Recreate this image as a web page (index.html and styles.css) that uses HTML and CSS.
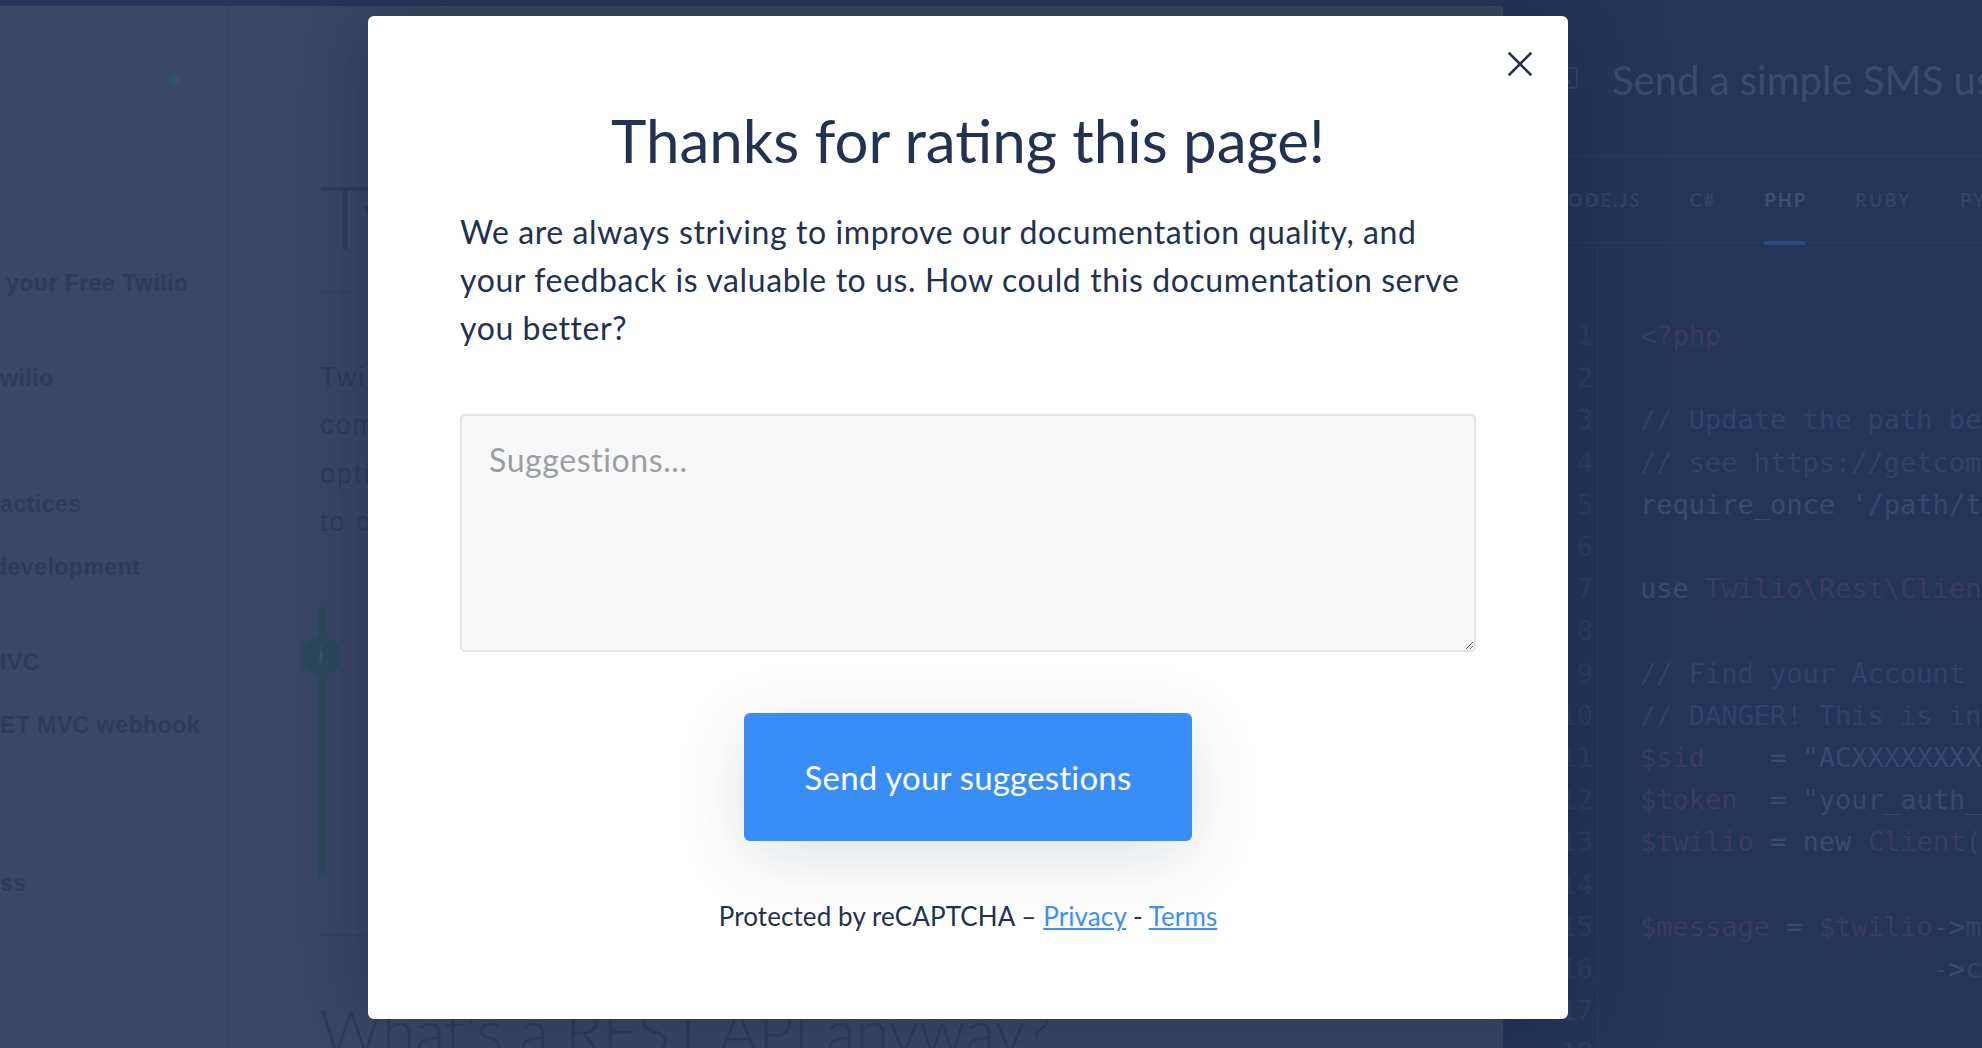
FILE: index.html
```html
<!DOCTYPE html>
<html lang="en">
<head>
<meta charset="utf-8">
<title>Thanks for rating this page</title>
<link rel="stylesheet" href="styles.css">
</head>
<body>
<div class="page">
  <div class="left">
    <div class="leftrow">
      <aside class="sidebar">
        <div class="side-head"><span class="dot"></span></div>
        <nav class="nav">
          <div class="nav-item ind">your Free Twilio</div>
          <div class="nav-item g2">wilio</div>
          <div class="nav-item g3">actices</div>
          <div class="nav-item g1 cut">development</div>
          <div class="nav-item g2">IVC</div>
          <div class="nav-item g1">ET MVC webhook</div>
          <div class="nav-item g4">ss</div>
        </nav>
      </aside>
      <main class="content">
        <h1 class="doc-title">Twilio's REST API</h1>
        <div class="rule"></div>
        <p class="doc-text">Twilio's APIs (Application Programming Interfaces) power its platform<br>communications. Behind these APIs is a software layer connecting and<br>optimizing communications networks around the world to allow your users<br>to call and message anyone, globally.</p>
        <div class="timeline">
          <div class="bar"></div>
          <div class="info">i</div>
        </div>
        <div class="rule rule2"></div>
        <h2 class="doc-sub">What’s a REST API anyway?</h2>
      </main>
    </div>
  </div>
  <section class="codepanel">
    <div class="code-head">
      <svg class="code-icon" viewBox="0 0 28 28" width="28" height="28"><path d="M9 4h10a3 3 0 0 1 3 3v14a3 3 0 0 1-3 3H9a3 3 0 0 1-3-3V7a3 3 0 0 1 3-3z" fill="none" stroke="#34456a" stroke-width="2"/><circle cx="14" cy="18" r="2" fill="#34456a"/></svg>
      <span class="code-title">Send a simple SMS using PHP</span>
    </div>
    <div class="tabs">
      <span class="tab">NODE.JS</span>
      <span class="tab">C#</span>
      <span class="tab active">PHP</span>
      <span class="tab">RUBY</span>
      <span class="tab">PYTHON</span>
    </div>
    <div class="codebody">
      <div class="gutter">1<br>2<br>3<br>4<br>5<br>6<br>7<br>8<br>9<br>10<br>11<br>12<br>13<br>14<br>15<br>16<br>17<br>18</div>
      <pre class="lines"><span class="v">&lt;?php</span>

<span class="c">// Update the path below to your autoload.php,</span>
<span class="c">// see https://getcomposer.org/doc/01-basic-usage.md</span>
<span class="k">require_once</span> <span class="s">'/path/to/vendor/autoload.php'</span>;

<span class="k">use</span> <span class="v">Twilio\Rest\Client</span>;

<span class="c">// Find your Account Sid and Auth Token at twilio.com/console</span>
<span class="c">// DANGER! This is insecure. See http://twil.io/secure</span>
<span class="v">$sid</span>    <span class="k">=</span> <span class="s">"ACXXXXXXXXXXXXXXXXXXXXXXXXXXXXXXXX"</span>;
<span class="v">$token</span>  <span class="k">=</span> <span class="s">"your_auth_token"</span>;
<span class="v">$twilio</span> <span class="k">=</span> <span class="k">new</span> <span class="v">Client</span>(<span class="v">$sid</span>, <span class="v">$token</span>);

<span class="v">$message</span> <span class="k">=</span> <span class="v">$twilio</span><span class="k">-&gt;</span>messages
                  <span class="k">-&gt;</span>create(<span class="s">"+15558675310"</span>, <span class="c">// to</span>
                           array(
                               <span class="s">"body"</span> =&gt; <span class="s">"Hello"</span></pre>
    </div>
  </section>

  <div class="modal">
    <button class="close" aria-label="Close">
      <svg viewBox="0 0 24 24" width="24" height="24"><path d="M1.5 1.5L22.5 22.5M22.5 1.5L1.5 22.5" stroke="#22314f" stroke-width="2.6" stroke-linecap="round"/></svg>
    </button>
    <h2 class="m-title">Thanks for rating this page!</h2>
    <p class="m-text">We are always striving to improve our documentation quality, and your feedback is valuable to us. How could this documentation serve you better?</p>
    <textarea class="m-input" placeholder="Suggestions..."></textarea>
    <button class="m-send">Send your suggestions</button>
    <p class="m-foot">Protected by reCAPTCHA – <a href="#">Privacy</a> - <a href="#">Terms</a></p>
  </div>
</div>
</body>
</html>
```

FILE: styles.css
```css
* { box-sizing: border-box; }
html, body { margin: 0; padding: 0; }
body {
  width: 1982px;
  height: 1048px;
  overflow: hidden;
  background: #263659;
  font-family: "Lato", "Open Sans", sans-serif;
}
.page {
  position: relative;
  display: flex;
  width: 1982px;
  height: 1048px;
  overflow: hidden;
}
.left {
  flex: 1;
  display: flex;
  flex-direction: column;
  padding-top: 6px;
  background: #263659;
}
.leftrow {
  flex: 1;
  display: flex;
  background: #3a4866;
}
.sidebar {
  width: 228px;
  border-right: 1px solid #36435f;
  overflow: hidden;
  font-family: "Liberation Sans", Arial, sans-serif;
  font-weight: 700;
  font-size: 23px;
  letter-spacing: 0.5px;
  color: #2e3c5a;
}
.side-head {
  height: 149px;
  border-bottom: 1px solid #37445f;
  display: flex;
  align-items: center;
  justify-content: flex-end;
  padding-right: 47px;
}
.dot {
  width: 12px;
  height: 12px;
  border-radius: 50%;
  background: #335467;
}
.nav { padding-top: 113px; }
.nav-item { line-height: 31.6px; white-space: nowrap; }
.nav-item.ind { padding-left: 6px; }
.nav-item.cut { text-indent: -7px; }
.g1 { margin-top: 31.6px; }
.g2 { margin-top: 63.2px; }
.g3 { margin-top: 94.8px; }
.g4 { margin-top: 126.4px; }

.content {
  flex: 1;
  padding-left: 92px;
  overflow: hidden;
  color: #2f3d5b;
}
.doc-title {
  margin: 158px 0 0;
  font-family: "Lato", sans-serif;
  font-weight: 300;
  font-size: 86px;
  line-height: 1.2;
  white-space: nowrap;
}
.rule {
  margin-top: 25px;
  height: 1px;
  background: #35435f;
  margin-left: -3px;
}
.doc-text {
  margin: 60px 0 0;
  font-family: "Liberation Sans", Arial, sans-serif;
  font-size: 27px;
  line-height: 48.3px;
  letter-spacing: 2px;
  white-space: nowrap;
}
.timeline {
  position: relative;
  margin-top: 61px;
  margin-left: -2px;
  height: 269px;
  width: 40px;
}
.bar {
  width: 7px;
  height: 100%;
  background: #2f4a5c;
}
.info {
  position: absolute;
  left: -17px;
  top: 29px;
  width: 40px;
  height: 40px;
  border-radius: 50%;
  background: #2e4a5b;
  color: #3a5468;
  font: 700 22px/40px "Liberation Sans", sans-serif;
  text-align: center;
}
.rule2 { margin-top: 59px; }
.doc-sub {
  margin: 58px 0 0;
  font-family: "Lato", sans-serif;
  font-weight: 300;
  font-size: 61px;
  line-height: 1.2;
  white-space: nowrap;
}

.codepanel {
  width: 479px;
  background: #25355a;
  color: #34456a;
  overflow: hidden;
}
.code-head {
  height: 157px;
  border-bottom: 1px solid #2b3b60;
  display: flex;
  align-items: center;
  padding-left: 52px;
  gap: 29px;
}
.code-icon { flex: none; }
.code-title {
  font-family: "Lato", sans-serif;
  font-size: 40px;
  color: #3b4b6f;
  white-space: nowrap;
  margin-top: 3px;
}
.tabs {
  height: 86px;
  border-bottom: 1px solid #2b3b60;
  display: flex;
  align-items: center;
  padding-left: 25px;
  white-space: nowrap;
}
.tab {
  position: relative;
  padding: 0 24px;
  font-family: "Lato", sans-serif;
  font-weight: 700;
  font-size: 18px;
  letter-spacing: 2.2px;
  color: #33446a;
  line-height: 86px;
}
.tab.active { color: #3e4f74; }
.tab.active::after {
  content: "";
  position: absolute;
  left: 24px;
  right: 26px;
  bottom: -2px;
  height: 4px;
  background: #2c4a82;
}
.codebody {
  display: flex;
  padding-top: 72px;
  font-family: "DejaVu Sans Mono", "Liberation Mono", monospace;
  font-size: 27px;
  line-height: 42.2px;
}
.gutter {
  width: 95px;
  flex: none;
  text-align: right;
  padding-right: 4px;
  border-right: 1px solid #2a3a5e;
  color: #2d3d62;
  margin-top: -72px;
  padding-top: 72px;
}
.lines {
  margin: 0;
  padding-left: 42px;
  font: inherit;
  color: #33446a;
  white-space: pre;
}
.lines .c { color: #31436a; }
.lines .k { color: #3a4b71; }
.lines .v { color: #393d5e; }
.lines .s { color: #384870; }

.modal {
  position: absolute;
  left: 368px;
  top: 16px;
  width: 1200px;
  height: 1003px;
  background: #fff;
  border-radius: 6px;
  box-shadow: 0 0 90px rgba(15, 25, 45, 0.35);
  padding: 89px 92px 0;
  display: flex;
  flex-direction: column;
  color: #22314f;
}
.close {
  position: absolute;
  top: 36px;
  right: 36px;
  width: 24px;
  height: 24px;
  padding: 0;
  border: 0;
  background: none;
  display: flex;
}
.m-title {
  margin: 0;
  text-align: center;
  font-size: 60px;
  font-weight: 400;
  line-height: 70px;
  color: #233251;
}
.m-text {
  margin: 33px 0 0;
  font-size: 32px;
  letter-spacing: 0.6px;
  line-height: 48px;
}
.m-input {
  margin-top: 62px;
  height: 238px;
  width: 100%;
  border: 2px solid #e4e4e4;
  border-radius: 5px;
  background: #f8f8f8;
  padding: 20px 27px;
  font-family: "Lato", sans-serif;
  font-size: 32px;
  letter-spacing: 0.6px;
  line-height: 1.5;
  color: #22314f;
}
.m-input::placeholder { color: #9b9ea5; }
.m-send {
  align-self: center;
  margin-top: 61px;
  width: 448px;
  height: 128px;
  border: 0;
  border-radius: 6px;
  background: #388ef6;
  color: #fff;
  font-family: "Lato", sans-serif;
  font-size: 33px;
  letter-spacing: 0.2px;
  box-shadow: 0 16px 70px rgba(30, 42, 66, 0.14);
}
.m-foot {
  margin: 56px 0 0;
  text-align: center;
  font-size: 26px;
  letter-spacing: 0.1px;
  line-height: 1.5;
  color: #22314f;
}
.m-foot a { color: #3b8ff5; }
```
